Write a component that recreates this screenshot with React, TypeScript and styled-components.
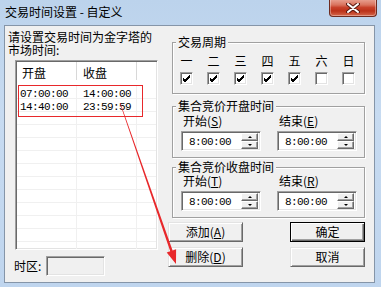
import styled, { createGlobalStyle } from 'styled-components';

const DAYS = [
  { label: '一', checked: true },
  { label: '二', checked: true },
  { label: '三', checked: true },
  { label: '四', checked: true },
  { label: '五', checked: true },
  { label: '六', checked: false },
  { label: '日', checked: false },
];

const ROWS = [
  ['07:00:00', '14:00:00'],
  ['14:40:00', '23:59:59'],
];

const EMPTY_ROWS = 11;

const GlobalStyle = createGlobalStyle`
  html, body {
    margin: 0;
    padding: 0;
  }
  body {
    font-family: "Noto Sans CJK SC", "Liberation Sans", sans-serif;
    font-size: 12px;
    color: #000;
  }
`;

const App = () => {
  return (
    <>
      <GlobalStyle />
      <Window>
        <TitleBar>
          <Title>交易时间设置 - 自定义</Title>
          <CloseButton>
            <svg width="14" height="10" viewBox="0 0 14 10">
              <path d="M2 1 L12 9 M12 1 L2 9" stroke="#5a1a12" strokeWidth="4" strokeLinecap="round" />
              <path d="M2 1 L12 9 M12 1 L2 9" stroke="#fff" strokeWidth="2" strokeLinecap="round" />
            </svg>
          </CloseButton>
        </TitleBar>
        <Client>
          <LeftCol>
            <Prompt>
              请设置交易时间为金字塔的
              <br />
              市场时间:
            </Prompt>
            <ListBox>
              <ListHeader>
                <HeaderCell $pad={5}>开盘</HeaderCell>
                <HeaderCell $pad={6}>收盘</HeaderCell>
                <HeaderCell $pad={0} $last />
              </ListHeader>
              <ListBody>
                {ROWS.map((row, idx) => (
                  <ListRow key={row[0] + idx.toString()}>
                    <Cell $pad={3}>
                      <Mono>{row[0]}</Mono>
                    </Cell>
                    <Cell $pad={6}>
                      <Mono>{row[1]}</Mono>
                    </Cell>
                    <Cell $pad={0} $last />
                  </ListRow>
                ))}
                {Array.from({ length: EMPTY_ROWS }).map((_, idx) => (
                  <ListRow key={'empty' + idx.toString()}>
                    <Cell $pad={3} />
                    <Cell $pad={6} />
                    <Cell $pad={0} $last />
                  </ListRow>
                ))}
              </ListBody>
            </ListBox>
            <ZoneRow>
              <span>时区:</span>
              <ZoneInput />
            </ZoneRow>
          </LeftCol>
          <RightCol>
            <Group>
              <Legend>交易周期</Legend>
              <DaysRow>
                {DAYS.map((day) => (
                  <DayCol key={day.label}>
                    <DayLabel>{day.label}</DayLabel>
                    <CheckBox>
                      {day.checked && (
                        <svg width="9" height="9" viewBox="0 0 9 9">
                          <path d="M1 4 L3 6 L8 1 M1 5 L3 7 L8 2 M1 6 L3 8 L8 3" stroke="#000" strokeWidth="1" fill="none" />
                        </svg>
                      )}
                    </CheckBox>
                  </DayCol>
                ))}
              </DaysRow>
            </Group>
            <Group $top={6}>
              <Legend>集合竞价开盘时间</Legend>
              <TimeGrid $padTop={3}>
                <TimeField>
                  <FieldLabel>
                    开始(<u>S</u>)
                  </FieldLabel>
                  <SpinBox value="8:00:00" />
                </TimeField>
                <TimeField>
                  <FieldLabel>
                    结束(<u>E</u>)
                  </FieldLabel>
                  <SpinBox value="8:00:00" />
                </TimeField>
              </TimeGrid>
            </Group>
            <Group $top={3}>
              <Legend>集合竞价收盘时间</Legend>
              <TimeGrid $padTop={2}>
                <TimeField>
                  <FieldLabel>
                    开始(<u>T</u>)
                  </FieldLabel>
                  <SpinBox value="8:00:00" />
                </TimeField>
                <TimeField>
                  <FieldLabel>
                    结束(<u>R</u>)
                  </FieldLabel>
                  <SpinBox value="8:00:00" />
                </TimeField>
              </TimeGrid>
            </Group>
            <ButtonGrid>
              <Button>
                添加(<u>A</u>)
              </Button>
              <Button $default>确定</Button>
              <Button>
                删除(<u>D</u>)
              </Button>
              <Button>取消</Button>
            </ButtonGrid>
          </RightCol>
        </Client>
        <Annotation width="381" height="287" viewBox="0 0 381 287">
          <rect x="18.5" y="85.5" width="124" height="31" fill="none" stroke="#e8282b" strokeWidth="1" />
          <polygon
            points="120.4,102.9 172.6,250.4 176.1,249.2 176,264 166.7,252.4 170.2,251.2 119.8,103.1"
            fill="#e8282b"
          />
        </Annotation>
      </Window>
    </>
  );
};

const SpinBox = ({ value }: { value: string }) => (
  <SpinFrame>
    <SpinText>
      <Mono>{value}</Mono>
    </SpinText>
    <SpinButtons>
      <SpinButton>
        <Arrow $up />
      </SpinButton>
      <SpinButton>
        <Arrow />
      </SpinButton>
    </SpinButtons>
  </SpinFrame>
);

export default App;

const Window = styled.div`
  position: relative;
  display: flex;
  flex-direction: column;
  width: 381px;
  height: 287px;
  overflow: hidden;

  background: linear-gradient(to bottom, #bcd3ec 0%, #c7dbf1 40%, #bfd5ee 100%);
`;

const TitleBar = styled.div`
  display: flex;
  align-items: flex-start;
  justify-content: space-between;
  height: 25px;
  padding: 0 4px 0 5px;
`;

const Title = styled.span`
  padding-top: 5px;

  font-size: 12px;
  line-height: 14px;
  color: #000;
`;

const CloseButton = styled.div`
  display: flex;
  align-items: center;
  justify-content: center;
  width: 46px;
  height: 17px;
  margin-top: -1px;

  background: linear-gradient(to bottom, #eaa596 0%, #d9735d 35%, #c8412a 50%, #bb3219 70%, #d5674b 100%);
  border: 1px solid #6e2b1f;
  border-top: none;
  border-radius: 0 0 4px 4px;
  box-shadow: inset 0 0 0 1px rgba(255, 255, 255, 0.35);
`;

const Client = styled.div`
  display: flex;
  height: 256px;
  margin: 0 6px 0 4px;

  background-color: #f0f0f0;
  border: 1px solid #8595a8;
`;

const LeftCol = styled.div`
  display: flex;
  flex-direction: column;
  width: 163px;
`;

const Prompt = styled.div`
  padding: 4px 0 0 3px;

  line-height: 13px;
  white-space: nowrap;
`;

const ListBox = styled.div`
  display: flex;
  flex-direction: column;
  width: 139px;
  height: 186px;
  margin: 4px 0 0 10px;
  padding: 1px;
  overflow: hidden;

  background-color: #fff;
  border-top: 1px solid #a0a0a0;
  border-left: 1px solid #a0a0a0;
  border-right: 1px solid #fff;
  border-bottom: 1px solid #fff;
  box-shadow: inset 1px 1px 0 #696969, inset -1px -1px 0 #e3e3e3;
`;

const ListHeader = styled.div`
  display: flex;
  flex-shrink: 0;
  height: 18px;

  background-color: #fff;
`;

const HeaderCell = styled.div<{ $pad: number; $last?: boolean }>`
  flex: ${({ $last }) => ($last ? '1' : '0 0 60px')};
  padding: 5px 0 0 ${({ $pad }) => $pad}px;

  line-height: 12px;
  border-right: ${({ $last }) => ($last ? 'none' : '1px solid #d8d8d8')};
  box-sizing: border-box;
`;

const ListBody = styled.div`
  display: flex;
  flex-direction: column;
  padding-top: 6px;
`;

const ListRow = styled.div`
  display: flex;
  flex-shrink: 0;
  height: 13px;

  border-bottom: 1px solid #f0f0f0;
  box-sizing: border-box;
`;

const Cell = styled.div<{ $pad: number; $last?: boolean }>`
  flex: ${({ $last }) => ($last ? '1' : '0 0 60px')};
  padding-left: ${({ $pad }) => $pad}px;

  line-height: 11px;
  border-right: ${({ $last }) => ($last ? 'none' : '1px solid #f0f0f0')};
  box-sizing: border-box;
`;

const Mono = styled.span`
  font-family: "Liberation Mono", "DejaVu Sans Mono", monospace;
  font-size: 11px;
  letter-spacing: -0.6px;
`;

const ZoneRow = styled.div`
  display: flex;
  gap: 5px;
  align-items: center;
  margin-top: 6px;
  padding-left: 9px;

  line-height: 12px;
`;

const ZoneInput = styled.div`
  width: 55px;
  height: 16px;
  padding: 1px;

  background-color: #f0f0f0;
  border-top: 1px solid #a0a0a0;
  border-left: 1px solid #a0a0a0;
  border-right: 1px solid #fff;
  border-bottom: 1px solid #fff;
  box-shadow: inset 1px 1px 0 #696969, inset -1px -1px 0 #e3e3e3;
`;

const RightCol = styled.div`
  display: flex;
  flex-direction: column;
  width: 198px;
  padding-top: 10px;
`;

const Group = styled.fieldset<{ $top?: number }>`
  min-width: 0;
  width: 193px;
  margin: ${({ $top }) => $top ?? 0}px 0 0 4px;
  padding: 0;

  border: 1px solid #a0a0a0;
  box-sizing: border-box;
  box-shadow: inset 1px 1px 0 #fff, 1px 1px 0 #fff;
`;

const Legend = styled.legend`
  margin-left: 3px;
  padding: 0 2px;

  line-height: 12px;
  background-color: #f0f0f0;
`;

const DaysRow = styled.div`
  display: flex;
  gap: 14px;
  padding: 7px 0 8px 7px;
`;

const DayCol = styled.div`
  display: flex;
  flex-direction: column;
  gap: 5px;
  align-items: center;
  width: 13px;
`;

const DayLabel = styled.span`
  line-height: 12px;
`;

const CheckBox = styled.div`
  display: flex;
  align-items: center;
  justify-content: center;
  width: 13px;
  height: 13px;

  background-color: #fff;
  border-top: 1px solid #a0a0a0;
  border-left: 1px solid #a0a0a0;
  border-right: 1px solid #fff;
  border-bottom: 1px solid #fff;
  box-shadow: inset 1px 1px 0 #696969, inset -1px -1px 0 #e3e3e3;
  box-sizing: border-box;
`;

const TimeGrid = styled.div<{ $padTop: number }>`
  display: grid;
  grid-template-columns: 96px 80px;
  padding: ${({ $padTop }) => $padTop}px 0 6px 8px;
`;

const TimeField = styled.div`
  display: flex;
  flex-direction: column;
  gap: 4px;
  align-items: flex-start;
`;

const FieldLabel = styled.span`
  margin-left: 2px;

  line-height: 12px;
  white-space: nowrap;
`;

const SpinFrame = styled.div`
  display: flex;
  align-items: center;
  justify-content: space-between;
  width: 80px;
  height: 20px;
  padding: 2px 2px 2px 7px;

  background-color: #fff;
  border-top: 1px solid #a0a0a0;
  border-left: 1px solid #a0a0a0;
  border-right: 1px solid #fff;
  border-bottom: 1px solid #fff;
  box-shadow: inset 1px 1px 0 #696969, inset -1px -1px 0 #e3e3e3;
  box-sizing: border-box;
`;

const SpinText = styled.span`
  line-height: 12px;
`;

const SpinButtons = styled.div`
  display: flex;
  flex-direction: column;
  width: 17px;
`;

const SpinButton = styled.div`
  display: flex;
  align-items: center;
  justify-content: center;
  height: 8px;

  background-color: #f0f0f0;
  border-top: 1px solid #fff;
  border-left: 1px solid #fff;
  border-right: 1px solid #696969;
  border-bottom: 1px solid #696969;
  box-shadow: inset -1px -1px 0 #a0a0a0;
  box-sizing: border-box;
`;

const Arrow = styled.span<{ $up?: boolean }>`
  width: 0;
  height: 0;

  border-left: 2px solid transparent;
  border-right: 2px solid transparent;
  ${({ $up }) => ($up ? 'border-bottom: 2px solid #000;' : 'border-top: 2px solid #000;')}
`;

const ButtonGrid = styled.div`
  display: grid;
  grid-template-columns: 75px 75px;
  gap: 5px 47px;
  margin-top: 4px;
`;

const Button = styled.div<{ $default?: boolean }>`
  display: flex;
  align-items: center;
  justify-content: center;
  height: 20px;

  line-height: 12px;
  background-color: #f0f0f0;
  border-top: 1px solid ${({ $default }) => ($default ? '#000' : '#e3e3e3')};
  border-left: 1px solid ${({ $default }) => ($default ? '#000' : '#e3e3e3')};
  border-right: 1px solid ${({ $default }) => ($default ? '#000' : '#696969')};
  border-bottom: 1px solid ${({ $default }) => ($default ? '#000' : '#696969')};
  box-shadow: ${({ $default }) =>
    $default
      ? 'inset 1px 1px 0 #fff, inset -1px -1px 0 #696969, inset -2px -2px 0 #a0a0a0'
      : 'inset 1px 1px 0 #fff, inset -1px -1px 0 #a0a0a0'};
  box-sizing: border-box;
`;

const Annotation = styled.svg`
  position: absolute;
  top: 0;
  left: 0;

  pointer-events: none;
`;
